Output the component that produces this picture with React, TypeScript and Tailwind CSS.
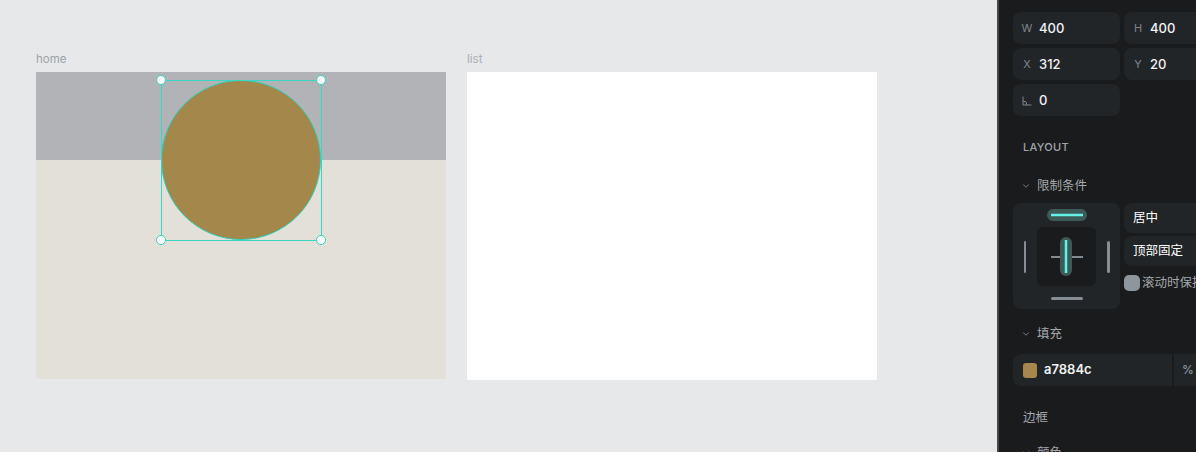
import { ChevronDown } from "lucide-react";

const font = { fontFamily: "Inter, 'Noto Sans CJK SC', sans-serif" };

const Field = ({ label, value }: { label: React.ReactNode; value: string }) => (
  <div className="h-8 rounded-lg bg-[#222528] flex items-center pl-[9px] pt-[1px] gap-[7px]">
    <span className="w-[10px] text-[11px] text-[#7f858b] flex items-center justify-center">{label}</span>
    <span className="text-[13px] font-medium text-[#f1f2f3]">{value}</span>
  </div>
);

const AngleIcon = () => (
  <svg width="10" height="10" viewBox="0 0 10 10" fill="none" stroke="#7f858b" strokeWidth="1">
    <path d="M1 0.5 V9 H9.5" />
    <path d="M1 5 A4 4 0 0 1 5 9" />
  </svg>
);

const SectionTitle = ({ children }: { children: string }) => (
  <div className="flex items-center h-5 text-[12.5px] text-[#a3a7ab]">
    <ChevronDown size={10} strokeWidth={2} className="text-[#8a8f94] ml-[8px] mr-[6px]" />
    {children}
  </div>
);

const Handle = ({ pos }: { pos: string }) => (
  <div className={`absolute w-[10px] h-[10px] rounded-full bg-white border-[1.5px] border-[#2fd3bd] ${pos}`} />
);

const ConstraintWidget = () => (
  <div className="w-[107px] h-[106px] rounded-lg bg-[#222528] flex flex-col items-center pt-[6px]">
    <svg width="40" height="12" viewBox="0 0 40 12">
      <rect x="0" y="0" width="40" height="12" rx="6" fill="#3d5a56" />
      <line x1="4" y1="6" x2="36" y2="6" stroke="#63f3e6" strokeWidth="2.5" />
    </svg>
    <div className="mt-[6px] flex items-center gap-[11px]">
      <div className="w-[2.5px] h-[32px] rounded bg-[#868e94]" />
      <div className="w-[59px] h-[59px] rounded-md bg-[#1a1b1d]">
        <svg width="59" height="59" viewBox="0 0 59 59">
          <line x1="14" y1="30" x2="46" y2="30" stroke="#838b91" strokeWidth="2" />
          <rect x="23" y="10" width="12" height="39" rx="6" fill="#3d5a56" />
          <line x1="29" y1="13" x2="29" y2="46" stroke="#63f3e6" strokeWidth="2.5" />
        </svg>
      </div>
      <div className="w-[2.5px] h-[32px] rounded bg-[#868e94]" />
    </div>
    <div className="mt-[11px] w-[32px] h-[2.5px] rounded bg-[#868e94]" />
  </div>
);

export default function App() {
  return (
    <div className="w-[1196px] h-[452px] overflow-hidden flex" style={font}>
      {/* canvas */}
      <div className="w-[997px] shrink-0 h-full bg-[#e7e8ea] flex gap-[21px] pl-[36px] pt-[51px]">
        <div className="flex flex-col">
          <span className="h-[14px] leading-[16px] text-[11.5px] text-[#9ca2a7] mb-[7px]">home</span>
          <div className="relative w-[410px] h-[307px] bg-[#e3e0da] flex flex-col">
            <div className="h-[88px] bg-[#b2b3b7]" />
            <div className="absolute left-[125px] top-[8px] w-[160px] h-[160px] rounded-full bg-[#a3874b] border border-[#2bd1b9]" />
            <div className="absolute left-[125px] top-[8px] w-[161px] h-[161px] border border-[#3ad6c3]" />
            <Handle pos="left-[120px] top-[3px]" />
            <Handle pos="left-[280px] top-[3px]" />
            <Handle pos="left-[120px] top-[163px]" />
            <Handle pos="left-[280px] top-[163px]" />
          </div>
        </div>
        <div className="flex flex-col">
          <span className="h-[14px] leading-[16px] text-[11.5px] text-[#a9aeb2] mb-[7px]">list</span>
          <div className="w-[410px] h-[308px] bg-white" />
        </div>
      </div>

      {/* inspector */}
      <div className="w-[260px] shrink-0 h-full bg-[#1a1b1d] border-l-2 border-[#45484c] pl-[14px] pt-3">
        <div className="grid grid-cols-[107px_107px] gap-1">
          <Field label="W" value="400" />
          <Field label="H" value="400" />
          <Field label="X" value="312" />
          <Field label="Y" value="20" />
          <Field label={<AngleIcon />} value="0" />
        </div>

        <div className="mt-[23px] pl-[10px] h-4 leading-4 text-[11px] font-medium tracking-wide text-[#a0a5aa]">LAYOUT</div>

        <div className="mt-[21px]">
          <SectionTitle>限制条件</SectionTitle>
        </div>

        <div className="mt-[7px] flex gap-1">
          <ConstraintWidget />
          <div className="flex flex-col">
            <div className="h-[30px] w-[107px] rounded-lg bg-[#222528] flex items-center pl-[9px] text-[12.5px] text-white">居中</div>
            <div className="mt-[3px] h-[30px] w-[107px] rounded-lg bg-[#222528] flex items-center pl-[9px] text-[12.5px] text-white">顶部固定</div>
            <div className="mt-[8px] flex items-center">
              <div className="w-[16px] h-[16px] rounded-[5px] bg-[#8d969c]" />
              <span className="ml-[2px] text-[12.5px] text-[#a3a7ab] whitespace-nowrap">滚动时保持固定</span>
            </div>
          </div>
        </div>

        <div className="mt-[15px]">
          <SectionTitle>填充</SectionTitle>
        </div>

        <div className="mt-[10px] flex gap-[2px]">
          <div className="w-[159px] h-8 rounded-l-lg bg-[#222528] flex items-center pl-[10px] gap-[7px]">
            <div className="w-[14px] h-[15px] rounded-[3px] bg-[#a7884c]" />
            <span className="text-[13px] font-semibold text-[#f1f2f3]">a7884c</span>
          </div>
          <div className="w-[50px] h-8 rounded-r-lg bg-[#222528] flex items-center pl-[8px] text-[12px] text-[#9ca2a7]">%</div>
        </div>

        <div className="mt-[22px] pl-[10px] h-5 leading-5 text-[12.5px] text-[#a3a7ab]">边框</div>

        <div className="mt-[15px]">
          <SectionTitle>颜色</SectionTitle>
        </div>
      </div>
    </div>
  );
}
